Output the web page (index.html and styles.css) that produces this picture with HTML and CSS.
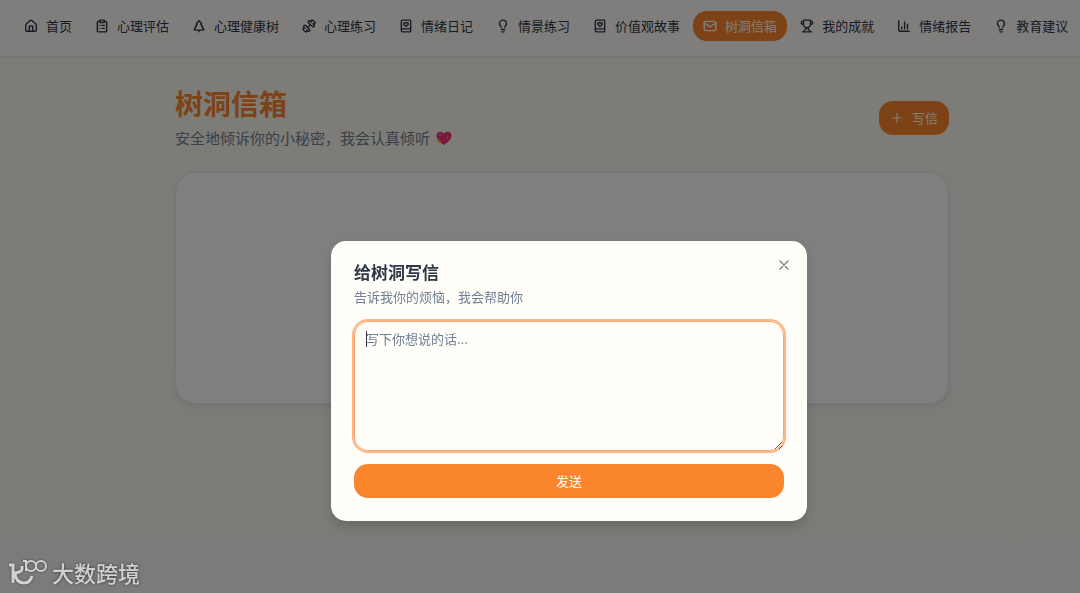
FILE: index.html
```html
<!DOCTYPE html>
<html lang="zh-CN">
  <head>
    <meta charset="UTF-8" />
    <meta name="viewport" content="width=device-width, initial-scale=1.0" />
    <title>树洞信箱</title>
    <link rel="stylesheet" href="styles.css">
  </head>
  <body>
    <header class="navbar">
      <nav class="nav-list">
        <a class="nav-item" href="#home">
          <svg class="icon" viewBox="0 0 24 24"><path d="M15 21v-8a1 1 0 0 0-1-1h-4a1 1 0 0 0-1 1v8" /><path d="M3 10a2 2 0 0 1 .7-1.5l7-6a2 2 0 0 1 2.6 0l7 6A2 2 0 0 1 21 10v9a2 2 0 0 1-2 2H5a2 2 0 0 1-2-2z" /></svg>
          首页
        </a>
        <a class="nav-item" href="#assessment">
          <svg class="icon" viewBox="0 0 24 24"><rect x="8" y="2" width="8" height="4" rx="1" /><path d="M16 4h2a2 2 0 0 1 2 2v14a2 2 0 0 1-2 2H6a2 2 0 0 1-2-2V6a2 2 0 0 1 2-2h2M12 11h4M12 16h4M8 11h.01M8 16h.01" /></svg>
          心理评估
        </a>
        <a class="nav-item" href="#tree">
          <svg class="icon" viewBox="0 0 24 24"><path d="m17 14 3 3.3a1 1 0 0 1-.7 1.7H4.7a1 1 0 0 1-.7-1.7L7 14h-.3a1 1 0 0 1-.7-1.7L9 9h-.2A1 1 0 0 1 8 7.3L12 3l4 4.3a1 1 0 0 1-.8 1.7H15l3 3.3a1 1 0 0 1-.7 1.7ZM12 22v-3" /></svg>
          心理健康树
        </a>
        <a class="nav-item" href="#practice">
          <svg class="icon" viewBox="0 0 24 24"><path d="M14.4 14.4 9.6 9.6M18.7 21.5a2 2 0 1 1-2.9-2.9l-1.7 1.8a2 2 0 1 1-2.9-2.9l6.4-6.3a2 2 0 1 1 2.9 2.9l-1.8 1.7a2 2 0 1 1 2.9 2.9zM5.3 2.5a2 2 0 1 1 2.9 2.9L9.9 3.6a2 2 0 1 1 2.9 2.9l-6.4 6.3a2 2 0 1 1-2.9-2.9l1.8-1.7a2 2 0 1 1-2.9-2.9z" transform="matrix(-1 0 0 1 24 0)" /></svg>
          心理练习
        </a>
        <a class="nav-item" href="#diary">
          <svg class="icon" viewBox="0 0 24 24"><path d="M4 19.5v-15A2.5 2.5 0 0 1 6.5 2H19a1 1 0 0 1 1 1v18a1 1 0 0 1-1 1H6.5a1 1 0 0 1 0-5H20" /><path d="M8.6 9.5a2 2 0 1 1 3.4-2 2 2 0 1 1 3.4 2L12 13z" /></svg>
          情绪日记
        </a>
        <a class="nav-item" href="#scene">
          <svg class="icon" viewBox="0 0 24 24"><path d="M15 14c.2-1 .7-1.7 1.5-2.5 1-.9 1.5-2.2 1.5-3.5A6 6 0 0 0 6 8c0 1 .2 2.2 1.5 3.5.7.7 1.3 1.5 1.5 2.5M9 18h6M10 22h4" /></svg>
          情景练习
        </a>
        <a class="nav-item" href="#stories">
          <svg class="icon" viewBox="0 0 24 24"><path d="M4 19.5v-15A2.5 2.5 0 0 1 6.5 2H19a1 1 0 0 1 1 1v18a1 1 0 0 1-1 1H6.5a1 1 0 0 1 0-5H20" /><path d="M8.6 9.5a2 2 0 1 1 3.4-2 2 2 0 1 1 3.4 2L12 13z" /></svg>
          价值观故事
        </a>
        <a class="nav-item active" href="#mailbox">
          <svg class="icon" viewBox="0 0 24 24"><rect x="2" y="4" width="20" height="16" rx="2" /><path d="m22 7-8.97 5.7a1.94 1.94 0 0 1-2.06 0L2 7" /></svg>
          树洞信箱
        </a>
        <a class="nav-item" href="#achievements">
          <svg class="icon" viewBox="0 0 24 24"><path d="M6 9H4.5a2.5 2.5 0 0 1 0-5H6M18 9h1.5a2.5 2.5 0 0 0 0-5H18M4 22h16M10 14.7V17c0 .6-.5 1-1 1.2C7.9 18.8 7 20.2 7 22M14 14.7V17c0 .6.5 1 1 1.2 1.1.6 2 2 2 3.8M18 2H6v7a6 6 0 0 0 12 0z" /></svg>
          我的成就
        </a>
        <a class="nav-item" href="#report">
          <svg class="icon" viewBox="0 0 24 24"><path d="M3 3v16a2 2 0 0 0 2 2h16M18 17V9M13 17V5M8 17v-3" /></svg>
          情绪报告
        </a>
        <a class="nav-item" href="#advice">
          <svg class="icon" viewBox="0 0 24 24"><path d="M15 14c.2-1 .7-1.7 1.5-2.5 1-.9 1.5-2.2 1.5-3.5A6 6 0 0 0 6 8c0 1 .2 2.2 1.5 3.5.7.7 1.3 1.5 1.5 2.5M9 18h6M10 22h4" /></svg>
          教育建议
        </a>
      </nav>
    </header>

    <main class="page">
      <div class="page-header">
        <div>
          <h1>树洞信箱</h1>
          <p class="subtitle">
            安全地倾诉你的小秘密，我会认真倾听
            <svg class="heart" viewBox="0 0 16 16">
              <path fill="#f0307a" d="M8 15C4 12 .5 9 .5 5.2.5 1.500 5.700.2 8 3.600c2.300-3.400 7.500-2.100 7.500 1.600C15.500 9 12 12 8 15z" />
              <path fill="#ffb03d" d="m4 3.200.4 1.200 1.200.4-1.200.4L4 6.400l-.4-1.200-1.200-.4 1.200-.4zM2.500 8l1 2.500 2 .7-1.500.8.6 1.800L1 11z" />
              <path fill="#ffb03d" d="m11.500 6 .4 1 1 .4-1 .4-.4 1-.4-1-1-.4 1-.4z" />
            </svg>
          </p>
        </div>
        <button class="btn write-btn" type="button">
          <svg class="icon" viewBox="0 0 24 24"><path d="M4 12h16M12 4v16" /></svg>
          写信
        </button>
      </div>
      <section class="card"></section>
    </main>

    <div class="overlay">
      <form class="modal" role="dialog" aria-labelledby="modalTitle">
        <button class="close-btn" type="button" aria-label="关闭">
          <svg class="icon" viewBox="0 0 24 24"><path d="M19 5 5 19M5 5l14 14" /></svg>
        </button>
        <h2 id="modalTitle">给树洞写信</h2>
        <label for="letter">告诉我你的烦恼，我会帮助你</label>
        <textarea id="letter" name="letter" placeholder="写下你想说的话..." autofocus></textarea>
        <button class="btn send-btn" type="submit">发送</button>
      </form>
    </div>

    <div class="watermark">
      <svg class="watermark-logo" viewBox="0 0 39 28">
        <path d="M0 7h4v18M13 8v3q0 3-7 4 1 10 9 10 6 0 8-7" />
        <path class="thin" d="M14 3h3v10" />
        <circle class="thin" cx="22" cy="8" r="5" />
        <circle class="thin" cx="32" cy="8" r="5" />
      </svg>
      <span>大数跨境</span>
    </div>
  </body>
</html>
```
FILE: styles.css
```css
* {
  box-sizing: border-box;
}

body {
  font-family: "Noto Sans CJK SC", sans-serif;
  background: linear-gradient(180deg, #fcf8ef, #f3f8f2);
  color: #2d3748;
  min-height: 100vh;
  margin: 0;
  overflow: hidden;
}

h1,
h2,
p {
  margin: 0;
}

.icon {
  width: 14px;
  height: 14px;
  flex-shrink: 0;
  fill: none;
  stroke: currentColor;
  stroke-width: 2;
  stroke-linecap: round;
  stroke-linejoin: round;
}

.navbar {
  background: #fffdf9;
  border-bottom: 1px solid #e8eaf0;
  box-shadow: 0 1px 2px rgba(0, 0, 0, 0.05);
  padding: 11px 14px 15px;
}

.nav-list {
  display: flex;
  gap: 3px;
}

.nav-item {
  display: flex;
  align-items: center;
  gap: 8px;
  height: 30px;
  padding: 0 10px;
  border-radius: 14px;
  color: #2d3748;
  font-size: 13px;
  line-height: 18px;
  white-space: nowrap;
  text-decoration: none;
}

.nav-item .icon {
  stroke-width: 2.4;
}

.nav-item.active {
  background: #fb852d;
  color: #fffdf7;
}

.page {
  padding: 28px 131px 28px 175px;
}

.page-header {
  display: flex;
  justify-content: space-between;
  align-items: center;
  margin-bottom: 21px;
}

h1 {
  margin-bottom: 4px;
  color: #fb852d;
  font-size: 28px;
  line-height: 36px;
}

.subtitle {
  display: flex;
  align-items: center;
  gap: 6px;
  color: #718096;
  font-size: 15px;
  line-height: 26px;
}

.heart {
  width: 16px;
  height: 16px;
}

.btn {
  display: flex;
  justify-content: center;
  align-items: center;
  height: 34px;
  border: none;
  border-radius: 14px;
  background: #fb852d;
  color: #fffdf7;
  font-family: inherit;
  font-size: 13px;
  line-height: 18px;
  cursor: pointer;
}

.write-btn {
  gap: 8px;
  padding: 0 11px;
}

.card {
  height: 232px;
  background: #ffffff;
  border: 1px solid #e2e8f0;
  border-radius: 20px;
  box-shadow: 0 2px 6px rgba(0, 0, 0, 0.08);
}

.overlay {
  position: fixed;
  inset: 0;
  display: flex;
  justify-content: center;
  align-items: center;
  padding: 168px 0 0 58px;
  background: rgba(0, 0, 0, 0.5);
}

.modal {
  position: relative;
  display: flex;
  flex-direction: column;
  width: 100%;
  max-width: 476px;
  padding: 19px 23px 23px;
  background: #fffdf7;
  border-radius: 15px;
  box-shadow: 0 6px 12px rgba(0, 0, 0, 0.15);
}

h2 {
  font-size: 17px;
  line-height: 24px;
}

label {
  color: #718096;
  font-size: 13px;
  line-height: 26px;
}

textarea {
  height: 130px;
  margin: 11px 0 13px;
  padding: 7px 11px;
  background: transparent;
  border: 1px solid #fba66c;
  border-radius: 14px;
  box-shadow: 0 0 0 2px #fdb687;
  color: #2d3748;
  font-family: inherit;
  font-size: 13px;
  line-height: 20px;
  outline: none;
  resize: vertical;
  caret-color: transparent;
}

textarea::placeholder {
  color: #718096;
}

/* thin caret at the start of the empty letter */
textarea:placeholder-shown {
  background: linear-gradient(#2d3748, #2d3748) 11px 9px / 1px 16px no-repeat;
}

.close-btn {
  position: absolute;
  top: 17px;
  right: 16px;
  display: flex;
  padding: 0;
  border: none;
  background: none;
  color: #696a69;
  cursor: pointer;
}

.watermark {
  position: fixed;
  left: 9px;
  bottom: 5px;
  display: flex;
  align-items: center;
  gap: 4px;
  color: #d0d1d0;
  font-size: 22px;
  font-weight: 500;
  line-height: 32px;
  text-shadow: 0 0 3px rgba(0, 0, 0, 0.6);
}

.watermark-logo {
  width: 39px;
  height: 28px;
  fill: none;
  stroke: currentColor;
  stroke-width: 3;
  filter: drop-shadow(0 0 1px rgba(0, 0, 0, 0.5));
}

.watermark-logo .thin {
  stroke-width: 2;
}
```
